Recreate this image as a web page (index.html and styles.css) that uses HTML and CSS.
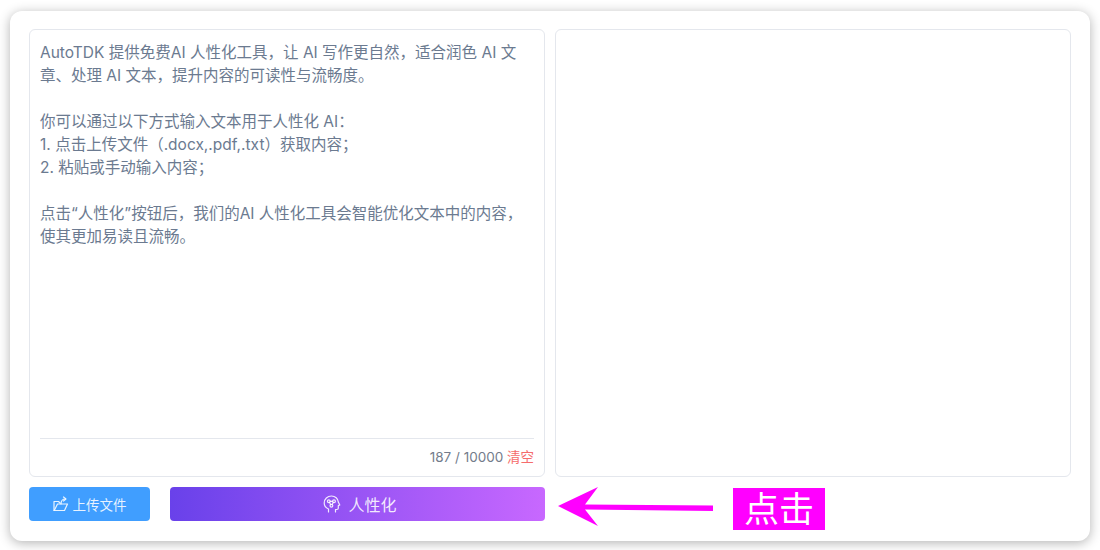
FILE: index.html
```html
<!DOCTYPE html>
<html>
<head>
<meta charset="UTF-8">
<title>AI 人性化</title>
<link rel="stylesheet" href="styles.css">
</head>
<body>
<div class="card">
    <div class="panes">
        <div class="pane">
            <div class="input-text">
                <p>AutoTDK 提供免费AI 人性化工具，让 AI 写作更自然，适合润色 AI 文章、处理 AI 文本，提升内容的可读性与流畅度。</p>
                <p>你可以通过以下方式输入文本用于人性化 AI：<br>1. 点击上传文件（.docx,.pdf,.txt）获取内容；<br>2. 粘贴或手动输入内容；</p>
                <p>点击“人性化”按钮后，我们的AI 人性化工具会智能优化文本中的内容，使其更加易读且流畅。</p>
            </div>
            <div class="counter">187 / 10000 <span class="clear">清空</span></div>
        </div>
        <div class="pane"></div>
    </div>
    <div class="actions">
        <div class="btn btn-upload">
            <svg class="icon-upload" viewBox="0 0 16 16" fill="none" stroke="currentColor" stroke-width="1.2" stroke-linejoin="round" stroke-linecap="round">
                <path d="M1 14.500V5.500h4.500l1.500 1.500"/>
                <path d="M1 14.500h10.500l3-6.500H4.500L1.500 14"/>
                <path d="M8 8c0-3 1.500-5 4.500-5"/>
                <path d="M10.500 1l2.500 2-2.500 2"/>
            </svg>
            上传文件
        </div>
        <div class="btn btn-human">
            <svg class="icon-head" viewBox="0 0 18 18" fill="none" stroke="currentColor" stroke-width="1.2" stroke-linejoin="round" stroke-linecap="round">
                <path d="M5.500 17v-3C2.800 12.800 1.200 10.500 1.200 8 1.200 4 4.500 1 8.500 1c3.800 0 6.500 2.800 6.800 6l1.500 3-1.500.6v2.400c0 1-.7 1.500-1.500 1.500H12.500v2.500"/>
                <circle cx="5.800" cy="6.300" r="1.400"/>
                <circle cx="11" cy="6.300" r="1.400"/>
                <circle cx="8.400" cy="10.800" r="1.400"/>
                <path d="M7.200 6.300h2.400M6.500 7.500l1.200 2M10.300 7.500l-1.200 2"/>
            </svg>
            人性化
        </div>
    </div>
    <svg class="arrow" viewBox="0 0 160 44">
        <path d="M1 20L41 1 28 18.500 156 19.500V25L28 23.500 41 40Z" fill="#ff00ff"/>
    </svg>
    <div class="click-label">点击</div>
</div>
</body>
</html>
```

FILE: styles.css
```css
body {
    margin: 0;
    padding: 11px 10px 9px;
    background: #fff;
    font-family: Inter, "Noto Sans CJK SC", sans-serif;
}
.card {
    position: relative;
    height: 530px;
    box-sizing: border-box;
    padding: 18px 19px 20px 19px;
    background: #fff;
    border-radius: 12px;
    box-shadow: 0 2px 12px rgba(0, 0, 0, 0.3);
    display: flex;
    flex-direction: column;
}
.panes {
    display: flex;
    gap: 10px;
    height: 448px;
}
.pane {
    flex: 1;
    box-sizing: border-box;
    padding: 10px;
    background: #fff;
    border: 1px solid #e4e7ed;
    border-radius: 6px;
    display: flex;
    flex-direction: column;
}
.input-text {
    flex: 1;
    width: 490px;
    padding-top: 1px;
    font-size: 15.500px;
    line-height: 23px;
    color: #6b7a90;
}
.input-text p {
    margin: 0 0 23px;
}
.counter {
    border-top: 1px solid #e4e7ed;
    padding-top: 9px;
    text-align: right;
    font-size: 13.500px;
    line-height: 18px;
    color: #737c8b;
}
.clear {
    color: #f56c6c;
}
.actions {
    display: flex;
    gap: 20px;
    margin-top: 10px;
    width: 516px;
}
.btn {
    height: 34px;
    display: flex;
    align-items: center;
    justify-content: center;
    border-radius: 4px;
    color: rgba(255, 255, 255, 0.88);
}
.btn-upload {
    width: 121px;
    flex: none;
    font-size: 13.500px;
    gap: 4px;
    background: #409eff;
}
.btn-human {
    flex: 1;
    padding-left: 5px;
    font-size: 16px;
    gap: 7px;
    background: linear-gradient(90deg, #6941ea, #c868ff);
}
.icon-upload {
    width: 16px;
    height: 16px;
}
.icon-head {
    width: 18px;
    height: 18px;
}
.arrow {
    position: absolute;
    left: 547px;
    top: 475px;
    width: 160px;
    height: 44px;
}
.click-label {
    position: absolute;
    left: 723px;
    top: 477px;
    width: 92px;
    height: 42px;
    background: #ff00ff;
    color: #fff;
    font-size: 35px;
    line-height: 42px;
    text-align: center;
}
```
